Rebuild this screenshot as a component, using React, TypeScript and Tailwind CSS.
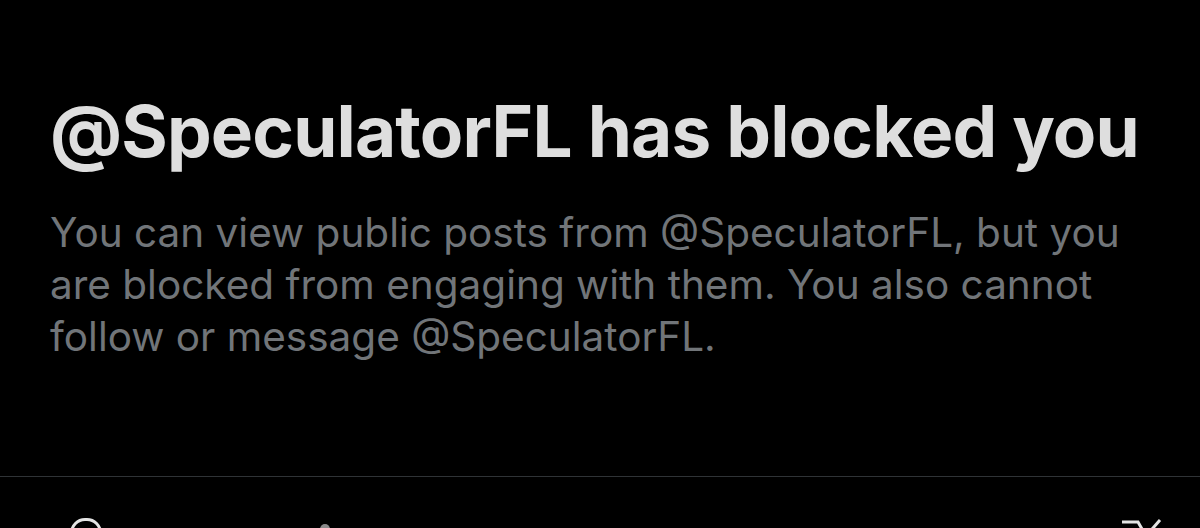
export default function App() {
  return (
    <div className="flex h-[528px] w-[1200px] flex-col overflow-hidden bg-black font-['Inter',sans-serif]">
      <div className="px-[50px] pt-[96px]">
        <h1 className="text-[71px] font-bold leading-none tracking-[-0.012em] text-[#dedede]">
          @SpeculatorFL has blocked you
        </h1>
        <p className="mt-[40px] text-[40.5px] leading-[52px] text-[#717579]">
          You can view public posts from @SpeculatorFL, but you
          <br />
          are blocked from engaging with them. You also cannot
          <br />
          follow or message @SpeculatorFL.
        </p>
      </div>

      <div className="mt-auto border-t border-[#2f3336]" />

      {/* icon row, only the tops show at the bottom edge */}
      <div className="relative h-[51px] shrink-0">
        <div className="absolute left-[70px] top-[41px] h-[30px] w-[32px] rounded-full border-[3px] border-[#e4e4e4]" />
        <div className="absolute left-[320px] top-[47px] h-[10px] w-[10px] rounded-full bg-[#8a8a8a]" />
        <svg
          className="absolute left-[1118px] top-[41px]"
          width="44"
          height="20"
          viewBox="0 0 44 20"
          fill="none"
          stroke="#e4e4e4"
          strokeWidth="3"
        >
          <path d="M4 4h16l8 14" />
          <path d="M42 2L28 18" />
        </svg>
      </div>
    </div>
  );
}
